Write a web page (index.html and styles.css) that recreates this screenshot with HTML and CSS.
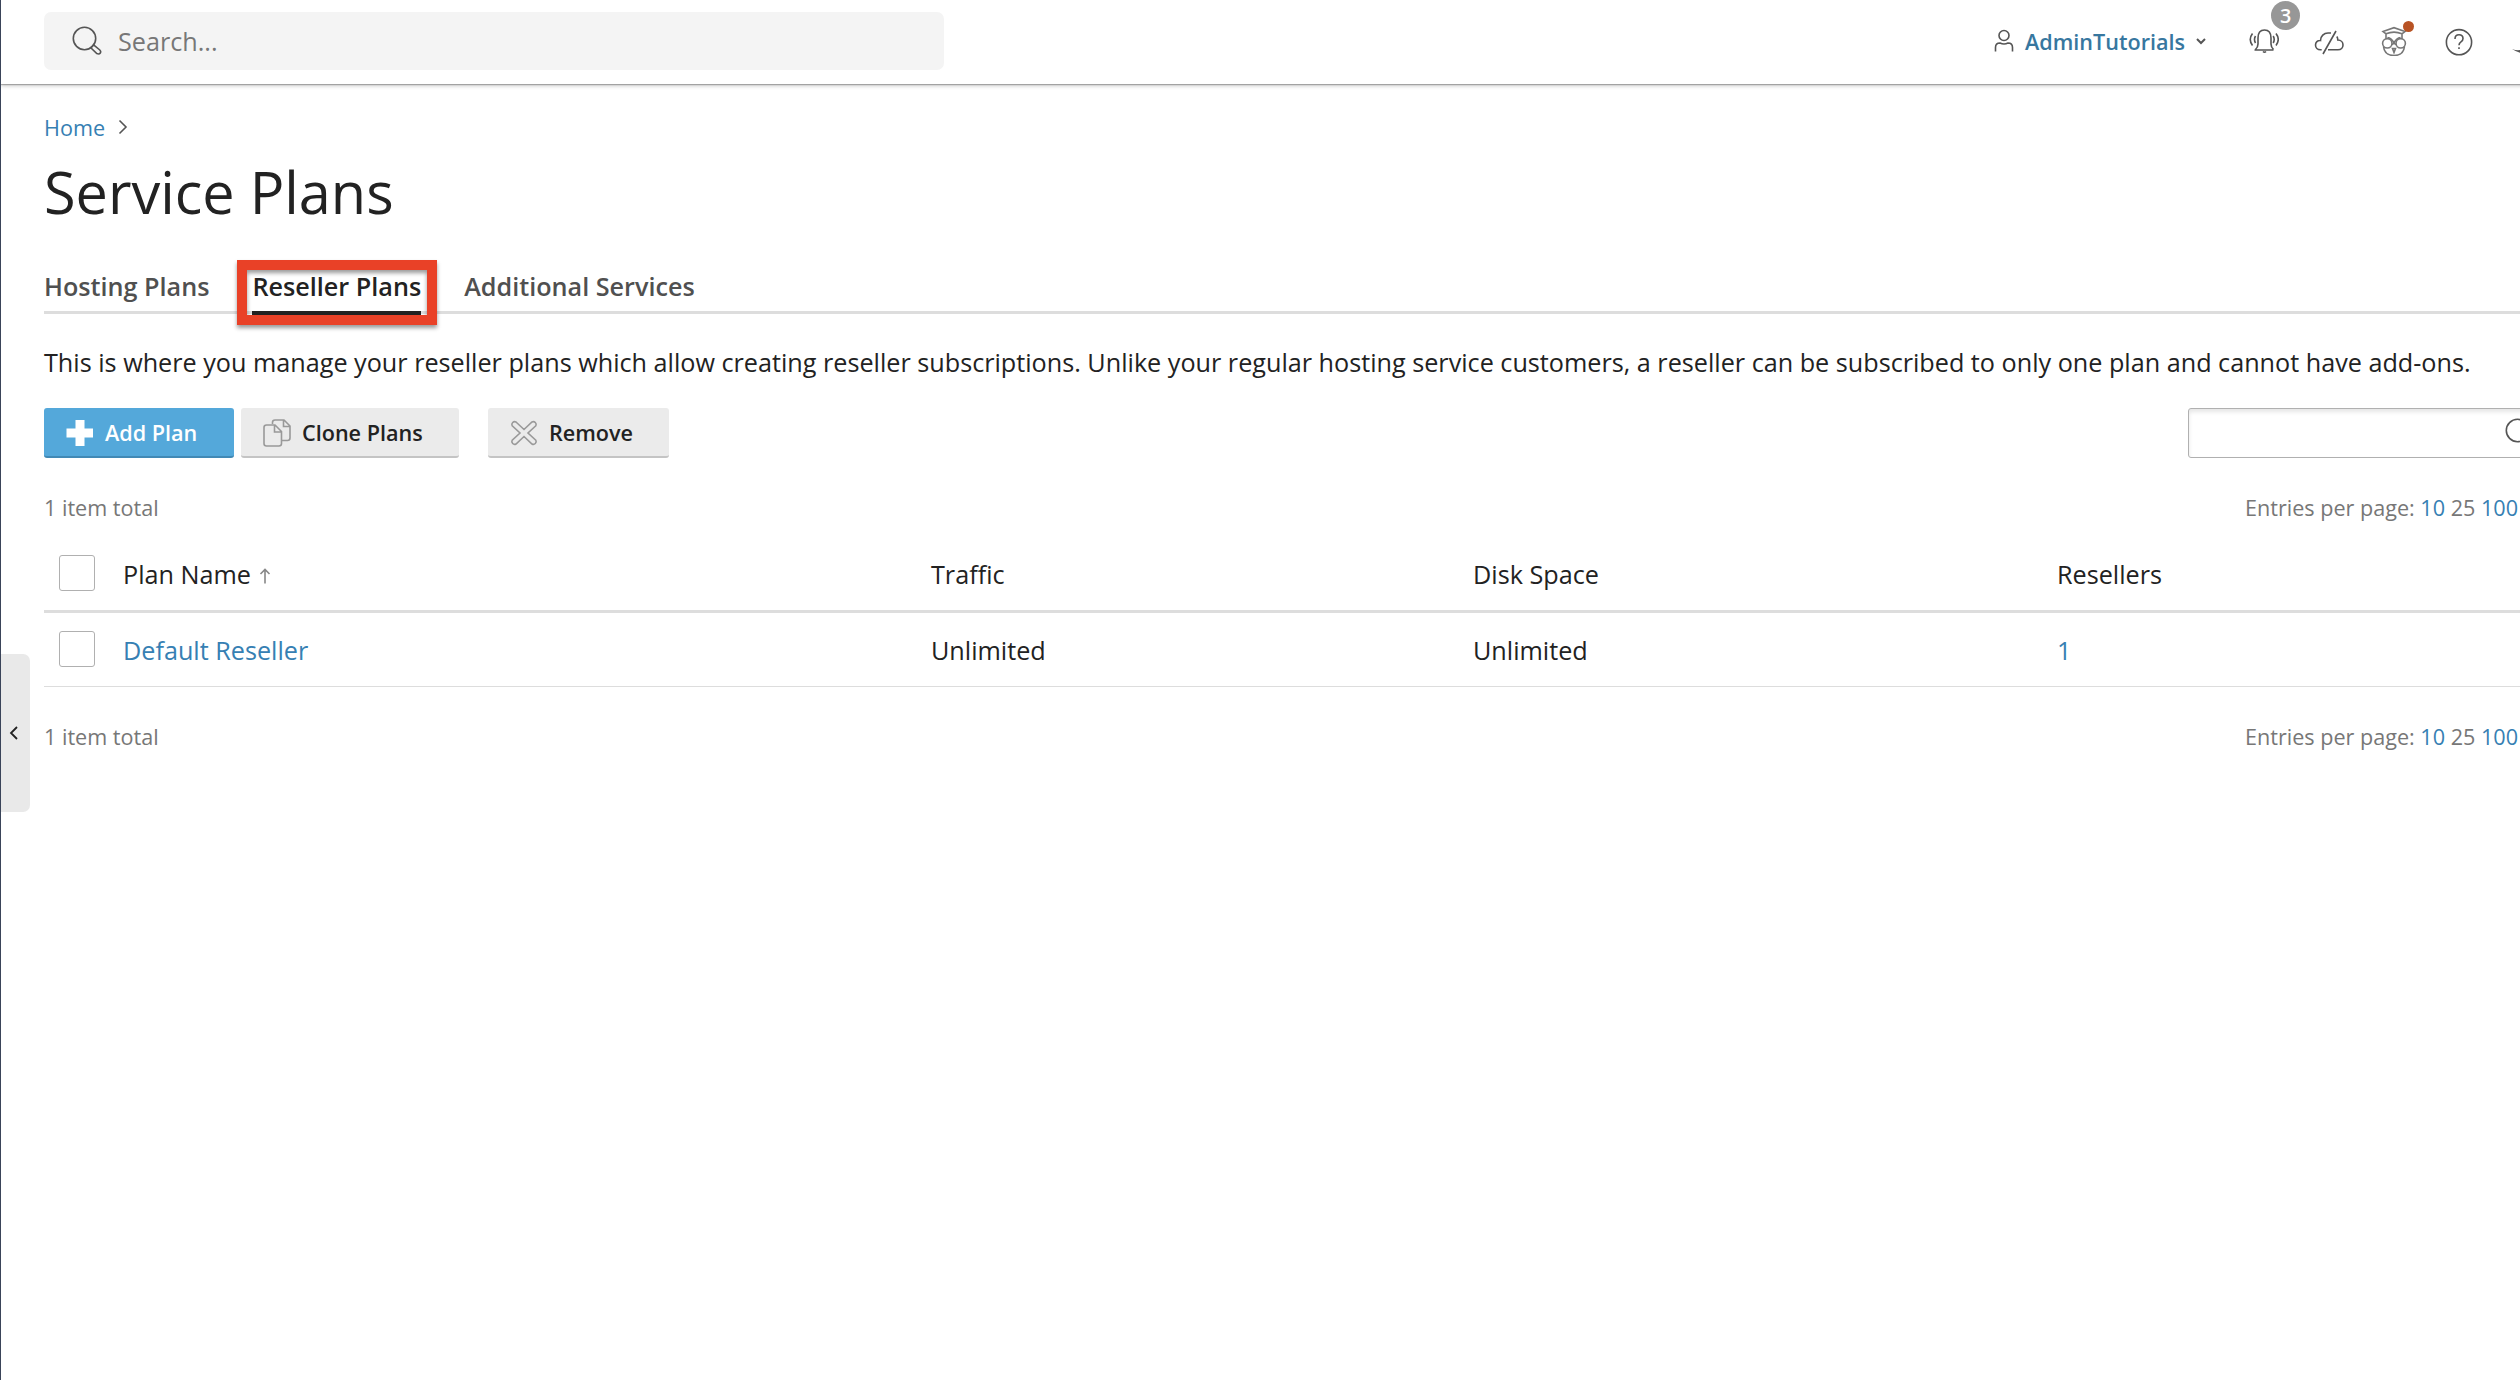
FILE: index.html
```html
<!DOCTYPE html>
<html lang="en">
<head>
    <meta charset="UTF-8">
    <meta name="viewport" content="width=device-width, initial-scale=1.0">
    <title>Service Plans</title>
    <link rel="stylesheet" href="styles.css">
</head>
<body>

<header class="topbar">
    <div class="search">
        <svg class="search-icon" viewBox="0 0 30 30">
            <circle cx="12.5" cy="12.5" r="11.2"/>
            <path d="M18.8 21.8l2.800-3 6.200 5.200q1.500 1.500.500 3t-3.500.600z"/>
        </svg>
        <span>Search...</span>
    </div>
    <div class="user">
        <svg class="user-icon" viewBox="0 0 20 24">
            <circle cx="10" cy="6.5" r="5"/>
            <path d="M1.5 22.5v-4q0-4.500 4.500-4.500q4 2 8 0q4.500 0 4.500 4.500v4"/>
        </svg>
        <a class="user-name">AdminTutorials</a>
        <svg class="user-arrow" viewBox="0 0 12 8"><path d="M2 2l4 4 4-4"/></svg>
    </div>
    <div class="tools">
        <div class="tool">
            <svg viewBox="0 0 30 30">
                <path d="M5.500 24h19M6.500 23.500q2.500-2.500 2.500-5.500v-6q0-8 6.500-8t6.500 8v6q0 3 2.500 5.500M14 25.500q1.500 1.500 3 0M3.500 7.500q-4.500 6 0 12M6.500 10q-2 3.500 0 7M27 7.500q4.500 6 0 12M24.200 10q2 3.500 0 7"/>
            </svg>
            <span class="badge">3</span>
        </div>
        <div class="tool">
            <svg viewBox="0 0 30 30">
                <path d="M7.700 23.700H6.500C3.500 23.700 1.500 21.700 1.500 19s2-4.800 5-4.500C6.500 10 10 7 14 7h3M14 23.700h10c3 0 5-2 5-4.700s-2-5-5.200-5c0-1.500-.300-2.500-1-3.500M22 5L9 28"/>
            </svg>
        </div>
        <div class="tool">
            <svg class="owl" viewBox="0 0 30 30">
                <path d="M4 5.500L15 1.700l11 3.800-3 2.300Q15 4.500 7 7.800zM7 7.800v5M23 7.800v5M8.500 11.500q4 .500 6.500 5.500 2.500-5 6.500-5.500M12.500 19l2.500-2 2.500 2M4.500 20.500q1 9 10.500 9t10.500-9M13.500 22.500L15 26.500l1.500-4z"/>
                <circle cx="8.300" cy="17.300" r="4.700"/>
                <circle cx="21.700" cy="17.300" r="4.700"/>
            </svg>
            <span class="dot"></span>
        </div>
        <div class="tool">
            <svg viewBox="0 0 30 30">
                <circle cx="15" cy="16.200" r="12.600"/>
                <path d="M11 13q0-4.200 4-4.200t4 3.700q0 2-2 3.300t-2 3.400M15 21.200v1.800"/>
            </svg>
        </div>
        <div class="tool">
            <svg class="moon" viewBox="0 0 30 30"><path d="M3 23q9 3.500 16-3 7-7 4-15 8 10 0 18t-20 0z"/></svg>
        </div>
    </div>
</header>

<button class="collapse">
    <svg viewBox="0 0 10 14"><path d="M8 1L2 7l6 6"/></svg>
</button>

<main class="page">
    <nav class="breadcrumb">
        <a>Home</a>
        <svg viewBox="0 0 10 16"><path d="M1.500 1.500L8 8l-6.500 6.500"/></svg>
    </nav>
    <h1>Service Plans</h1>

    <div class="tabs">
        <a class="tab">Hosting Plans</a>
        <a class="tab active">Reseller Plans<span class="highlight"></span></a>
        <a class="tab">Additional Services</a>
    </div>

    <p class="description">This is where you manage your reseller plans which allow creating reseller subscriptions. Unlike your regular hosting service customers, a reseller can be subscribed to only one plan and cannot have add-ons.</p>

    <div class="toolbar">
        <button class="btn btn-add">
            <svg viewBox="0 0 28 28"><path d="M9.500 1h9v8.500H27v9h-8.500V27h-9v-8.500H.500v-9h9z"/></svg>
            Add Plan
        </button>
        <button class="btn btn-clone">
            <svg viewBox="0 0 28 28">
                <path d="M9.500 5V3.500q0-2.500 2.500-2.500h9l6 6v12q0 2.500-2.500 2.500H19M20.500 1v6.500H27"/>
                <path d="M3.500 6H12l6.500 6.500V24.500q0 2.500-2.500 2.500H3.500Q1 27 1 24.500V8.500Q1 6 3.500 6zM11.500 6v7h7"/>
            </svg>
            Clone Plans
        </button>
        <button class="btn btn-remove">
            <svg viewBox="0 0 28 28"><path d="M6 3l8 7.500L22 3q1.800-1 3.300.500t.500 3.300L18 14l7.800 7.200q1 1.800-.500 3.300T22 25l-8-7.500L6 25q-1.800 1-3.300-.500t-.500-3.300L10 14 2.200 6.800q-1-1.800.500-3.300T6 3z"/></svg>
            Remove
        </button>
        <div class="filter">
            <svg class="search-icon" viewBox="0 0 30 30">
                <circle cx="12.5" cy="12.5" r="11.2"/>
                <path d="M18.8 21.8l2.800-3 6.200 5.200q1.500 1.500.500 3t-3.500.600z"/>
            </svg>
        </div>
    </div>

    <div class="paging">
        <span>1 item total</span>
        <span class="per-page">Entries per page: <a>10</a> 25 <a>100</a></span>
    </div>

    <table>
        <thead>
        <tr>
            <th class="col-check"><span class="checkbox"></span></th>
            <th class="col-name">Plan Name <svg class="sort" viewBox="0 0 12 16"><path d="M6 15.500V2M1.500 6L6 1.500 10.500 6"/></svg></th>
            <th class="col-traffic">Traffic</th>
            <th class="col-disk">Disk Space</th>
            <th>Resellers</th>
        </tr>
        </thead>
        <tbody>
        <tr>
            <td><span class="checkbox"></span></td>
            <td><a>Default Reseller</a></td>
            <td>Unlimited</td>
            <td>Unlimited</td>
            <td><a>1</a></td>
        </tr>
        </tbody>
    </table>

    <div class="paging">
        <span>1 item total</span>
        <span class="per-page">Entries per page: <a>10</a> 25 <a>100</a></span>
    </div>
</main>

</body>
</html>
```

FILE: styles.css
```css
* { box-sizing: border-box; }
body {
    margin: 0;
    height: 1380px;
    overflow: hidden;
    border-left: 1px solid #3a4459;
    background: #fff;
    color: #222;
    font-family: "Open Sans", sans-serif;
    font-size: 25.2px;
    position: relative;
}
a { color: #3680b3; }
svg {
    fill: none;
    stroke: #555;
    stroke-width: 1.6;
    display: block;
    flex: none;
}
button { font-family: inherit; border: 0; padding: 0; }
.topbar {
    width: 2560px;
    height: 84px;
    padding: 12px 0 14px 43px;
    display: flex;
    align-items: flex-start;
    box-shadow: 0 1px 1px rgba(0, 0, 0, 0.25), 0 2px 4px rgba(0, 0, 0, 0.2);
}
.search {
    width: 900px;
    height: 58px;
    padding-left: 28px;
    display: flex;
    align-items: center;
    gap: 16px;
    background: #f4f4f4;
    border-radius: 7px;
    color: #777;
    line-height: 58px;
}
.search-icon { width: 30px; height: 30px; }
.user {
    height: 58px;
    margin-left: 1050px;
    display: flex;
    align-items: center;
}
.user-icon { width: 20px; height: 24px; }
.user-name {
    margin-left: 11px;
    font-size: 21.6px;
    font-weight: 600;
    color: #37779f;
}
.user-arrow { width: 12px; height: 8px; margin-left: 10px; stroke-width: 2; }
.tools { display: flex; margin-left: 42px; padding-top: 14px; gap: 35px; }
.tool { position: relative; width: 30px; height: 30px; }
.tool svg { width: 30px; height: 30px; }
.tool .owl { stroke: #777; }
.tool .moon { fill: #555; stroke: none; }
.badge {
    position: absolute;
    left: 22px;
    top: -25px;
    width: 29px;
    height: 29px;
    border-radius: 50%;
    background: #979797;
    color: #fff;
    font-size: 19.8px;
    font-weight: 600;
    line-height: 29px;
    text-align: center;
}
.dot {
    position: absolute;
    left: 24px;
    top: -5px;
    width: 11px;
    height: 11px;
    border-radius: 50%;
    background: #b85324;
}
/* sidebar handle lies over the page edge */
.collapse {
    position: absolute;
    left: 0;
    top: 654px;
    width: 29px;
    height: 158px;
    padding-left: 8px;
    border-radius: 0 7px 7px 0;
    background: #e9e9e9;
}
.collapse svg { width: 10px; height: 14px; stroke: #222; stroke-width: 1.8; }
.page { width: 2560px; padding-left: 43px; }
.breadcrumb {
    height: 50px;
    margin-top: 18px;
    display: flex;
    align-items: center;
    gap: 13px;
    font-size: 21.6px;
}
.breadcrumb svg { width: 10px; height: 16px; }
h1 {
    margin: 0;
    font-size: 57.6px;
    font-weight: 400;
    line-height: 80px;
}
.tabs {
    height: 64px;
    margin-top: 18px;
    padding-top: 18px;
    display: flex;
    gap: 43px;
    border-bottom: 3px solid #ddd;
}
.tab {
    position: relative;
    height: 47px;
    font-weight: 600;
    line-height: 36px;
    color: #505050;
}
.tab.active { color: #222; border-bottom: 4px solid #222; }
.highlight {
    position: absolute;
    left: -15px;
    top: -8px;
    width: 200px;
    height: 65px;
    border: 10px solid #e94127;
    box-shadow: 0 3px 4px rgba(0, 0, 0, 0.4), inset 0 3px 4px rgba(0, 0, 0, 0.4);
}
.description { margin: 28px 0 0; line-height: 40px; white-space: nowrap; }
.toolbar { display: flex; margin-top: 26px; height: 50px; }
.btn {
    height: 50px;
    padding: 1px 0 0 22px;
    display: flex;
    align-items: center;
    gap: 11px;
    background: #ebebeb;
    border-bottom: 2px solid #c4c4c4;
    border-radius: 3px;
    color: #222;
    font-size: 21.6px;
    font-weight: 600;
}
.btn svg { width: 28px; height: 28px; stroke: #999; }
.btn-add { width: 190px; background: #54a8da; border-color: #4189b5; color: #fff; }
.btn-add svg { fill: #fff; stroke: none; }
.btn-clone { width: 218px; margin-left: 7px; }
.btn-remove { width: 181px; margin-left: 29px; }
.filter {
    width: 372px;
    height: 50px;
    margin-left: 1519px;
    padding: 9px 0 0 316px;
    border: 1px solid #b0b0b0;
    border-radius: 3px;
    box-shadow: inset 0 3px 4px rgba(0, 0, 0, 0.1);
}
.paging {
    width: 2474px;
    height: 30px;
    margin-top: 35px;
    display: flex;
    justify-content: space-between;
    color: #777;
    font-size: 21.6px;
    line-height: 30px;
}
table {
    width: 2517px;
    margin-top: 15px;
    table-layout: fixed;
    border-collapse: separate;
    border-spacing: 0;
}
th, td {
    padding: 0;
    text-align: left;
    font-weight: 400;
    line-height: 36px;
}
th { height: 75px; border-bottom: 3px solid #ddd; }
td { height: 74px; border-bottom: 1px solid #ddd; }
.col-check { width: 79px; }
.col-name { width: 808px; }
.col-traffic { width: 542px; }
.col-disk { width: 584px; }
.checkbox {
    display: block;
    width: 36px;
    height: 36px;
    margin: -1px 0 1px 15px;
    border: 1px solid #b0b0b0;
    border-radius: 3px;
}
.sort {
    display: inline-block;
    width: 12px;
    height: 16px;
    margin-left: 2px;
    stroke: #888;
}
```
